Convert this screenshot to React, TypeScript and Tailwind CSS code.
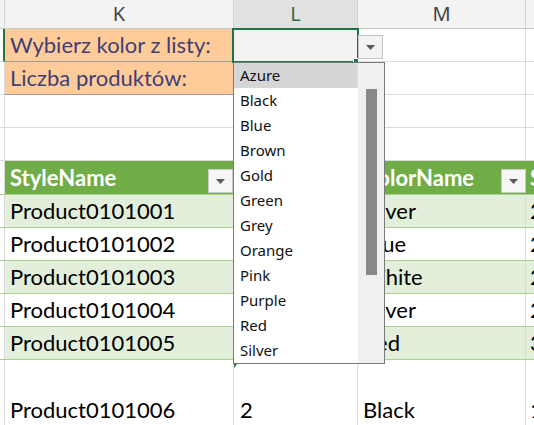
import React from "react";

const cellFont = "font-['Lato',sans-serif] text-[22px] leading-[26px]";
const uiFont = "font-['Noto_Sans',sans-serif]";

const items = ["Azure", "Black", "Blue", "Brown", "Gold", "Green", "Grey", "Orange", "Pink", "Purple", "Red", "Silver"];

const rows = [
  { style: "Product0101001", color: "Silver", n: "2" },
  { style: "Product0101002", color: "Blue", n: "2" },
  { style: "Product0101003", color: "White", n: "2" },
  { style: "Product0101004", color: "Silver", n: "2" },
  { style: "Product0101005", color: "Red", n: "3" },
];

function Arrow() {
  return (
    <svg width="9" height="5" viewBox="0 0 9 5">
      <path d="M0 0h9L4.5 5z" fill="#5a5a5a" />
    </svg>
  );
}

function FilterBtn() {
  return (
    <div className="w-[25px] h-[24px] mb-[1px] shrink-0 bg-[#f6f6f6] border border-[#c9c9c9] flex items-center justify-center">
      <Arrow />
    </div>
  );
}

function InputRow({ label, active }: { label: string; active?: boolean }) {
  return (
    <div className="flex h-[33px]">
      <div className={`w-[5px] shrink-0 border-b border-[#dadada] ${active ? "border-r-2 border-r-[#217346]" : "border-r border-r-[#dadada]"}`} />
      <div className={`w-[229px] shrink-0 bg-[#ffcc99] border-r border-b border-[#9a9a9a] flex items-center pl-[5px] text-[#3f3f76] ${cellFont}`}>
        {label}
      </div>
      <div className={`w-[124px] shrink-0 border-r border-b border-[#dadada] ${active ? "bg-[#f2f2f2]" : ""}`} />
      <div className="w-[168px] shrink-0 border-r border-b border-[#dadada]" />
      <div className="flex-1 border-b border-[#dadada]" />
    </div>
  );
}

function PlainRow() {
  return (
    <div className="flex h-[33px] border-b border-[#dadada]">
      <div className="w-[5px] shrink-0 border-r border-[#dadada]" />
      <div className="w-[229px] shrink-0 border-r border-[#dadada]" />
      <div className="w-[124px] shrink-0 border-r border-[#dadada]" />
      <div className="w-[168px] shrink-0 border-r border-[#dadada]" />
      <div className="flex-1" />
    </div>
  );
}

export default function App() {
  return (
    <div className="relative w-[534px] h-[425px] overflow-hidden bg-white">
      {/* column headers */}
      <div className={`flex h-[29px] bg-[#f3f3f3] border-b border-[#c9c9c9] text-[20px] text-[#444] ${uiFont}`}>
        <div className="w-[5px] shrink-0 border-r border-[#d2d2d2]" />
        <div className="w-[229px] shrink-0 border-r border-[#d2d2d2] flex items-center justify-center">K</div>
        <div className="w-[124px] shrink-0 border-r border-[#d2d2d2] bg-[#e1e1e1] text-[#217346] flex items-center justify-center">L</div>
        <div className="w-[168px] shrink-0 border-r border-[#d2d2d2] flex items-center justify-center">M</div>
        <div className="flex-1" />
      </div>

      <InputRow label="Wybierz kolor z listy:" active />
      <InputRow label="Liczba produktów:" />
      <PlainRow />
      <PlainRow />

      {/* table header */}
      <div className={`flex h-[33px] font-bold text-white ${cellFont}`}>
        <div className="w-[5px] shrink-0 border-r border-[#dadada]" />
        <div className="w-[229px] shrink-0 bg-[#70ad47] flex items-end justify-between pl-[5px] pr-[1px]">
          <span className="self-center">StyleName</span>
          <FilterBtn />
        </div>
        <div className="w-[124px] shrink-0 bg-[#70ad47]" />
        <div className="w-[168px] shrink-0 bg-[#70ad47] flex items-end justify-between pl-[5px]">
          <span className="self-center">ColorName</span>
          <FilterBtn />
        </div>
        <div className="flex-1 bg-[#70ad47] flex items-center pl-[4px]">Size</div>
      </div>

      {/* table rows */}
      {rows.map((r, i) => (
        <div
          key={r.style}
          className={`flex h-[33px] border-t border-[#a9d08e] ${i % 2 === 0 ? "bg-[#e2efda]" : "bg-white"} ${cellFont} text-black`}
        >
          <div className="w-[5px] shrink-0 bg-white border-r border-[#dadada]" />
          <div className="w-[229px] shrink-0 flex items-center pl-[5px]">{r.style}</div>
          <div className="w-[124px] shrink-0" />
          <div className="w-[168px] shrink-0 border-r border-[#d3dfca] flex items-center pl-[5px]">{r.color}</div>
          <div className="flex-1 flex items-center pl-[4px]">{r.n}</div>
        </div>
      ))}

      {/* last row */}
      <div className={`flex h-[70px] border-t border-[#a9d08e] ${cellFont} text-black`}>
        <div className="w-[5px] shrink-0 border-r border-[#dadada]" />
        <div className="w-[229px] shrink-0 border-r border-[#dadada] flex items-end pb-[6px] pl-[5px]">Product0101006</div>
        <div className="w-[124px] shrink-0 border-r border-[#dadada] flex items-end pb-[6px] pl-[6px]">2</div>
        <div className="w-[168px] shrink-0 border-r border-[#dadada] flex items-end pb-[6px] pl-[5px]">Black</div>
        <div className="flex-1 flex items-end pb-[6px] pl-[4px]">1</div>
      </div>

      {/* error indicator */}
      <svg className="absolute left-[234px] top-[359px]" width="7" height="9" viewBox="0 0 7 9">
        <path d="M0 0h7L0 9z" fill="#1e7b34" />
      </svg>

      {/* active cell */}
      <div className="absolute left-[232px] top-[28px] w-[127px] h-[35px] border-2 border-[#217346]" />
      <div className="absolute left-[353px] top-[58px] w-[6px] h-[6px] bg-[#217346] border border-white" />

      {/* validation dropdown button */}
      <div className="absolute left-[358px] top-[35px] w-[25px] h-[24px] bg-[#f3f3f3] border border-[#c3c3c3] flex items-center justify-center">
        <Arrow />
      </div>

      {/* dropdown list */}
      <div className={`absolute left-[233px] top-[62px] w-[152px] h-[302px] bg-white border border-[#7a7a7a] flex text-[15px] text-[#111] ${uiFont}`}>
        <div className="w-[124px] shrink-0">
          {items.map((it, i) => (
            <div key={it} className={`h-[25px] flex items-center pl-[6px] ${i === 0 ? "bg-[#d6d6d6]" : ""}`}>
              {it}
            </div>
          ))}
        </div>
        <div className="flex-1 bg-[#f0f0f0] pt-[26px] pl-[8px]">
          <div className="w-[11px] h-[186px] bg-[#888888]" />
        </div>
      </div>
    </div>
  );
}
